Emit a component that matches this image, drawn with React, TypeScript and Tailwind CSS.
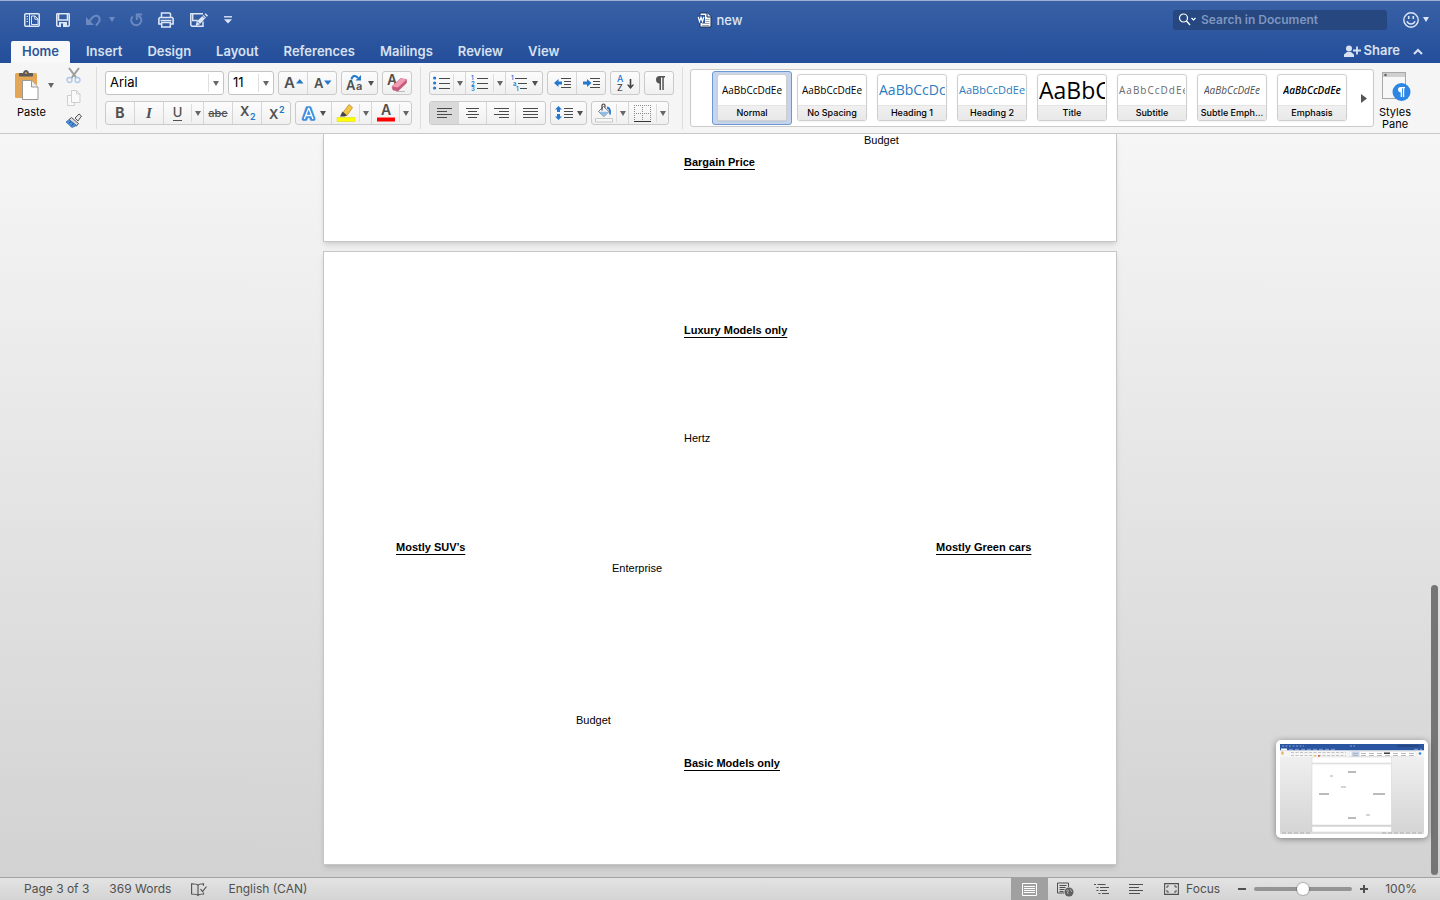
import type { ReactNode } from "react";

type IconProps = { w: number; h: number; children: ReactNode };

function Icon({ w, h, children }: IconProps) {
  return (
    <svg width={w} height={h} viewBox={`0 0 ${w} ${h}`} fill="none" aria-hidden="true" className="shrink-0 overflow-visible">
      {children}
    </svg>
  );
}

function Caret() {
  return (
    <svg width="6" height="5" viewBox="0 0 6 5" aria-hidden="true" className="shrink-0">
      <path d="M0 0h6L3 5z" fill="currentColor" />
    </svg>
  );
}

function Group({ children }: { children: ReactNode }) {
  return (
    <div className="flex h-6 shrink-0 divide-x divide-[#d6d6d6] rounded-[3px] border border-[#cacaca] bg-linear-to-b from-[#fcfcfc] to-[#f0f0f0]">
      {children}
    </div>
  );
}

type ToolProps = { label: string; width: string; children: ReactNode; pressed?: boolean };

function Tool({ label, width, children, pressed }: ToolProps) {
  return (
    <button
      type="button"
      aria-label={label}
      aria-pressed={pressed}
      className={`flex h-full items-center justify-center gap-1 text-[#505050] ${pressed ? "rounded-l-[2px] bg-[#d9d9d9]" : ""} ${width}`}
    >
      {children}
    </button>
  );
}

function More({ label }: { label: string }) {
  return (
    <button type="button" aria-label={label} className="flex h-full w-3 items-center text-[#666]">
      <span className="h-[18px] w-px bg-[#dcdcdc]" />
      <span className="flex flex-1 justify-center">
        <Caret />
      </span>
    </button>
  );
}

function Split({ children }: { children: ReactNode }) {
  return <div className="flex">{children}</div>;
}

function Combo({ label, value, width }: { label: string; value: string; width: string }) {
  return (
    <div className={`flex h-6 shrink-0 items-center rounded-[3px] border border-[#c4c4c4] bg-white ${width}`}>
      <select
        aria-label={label}
        defaultValue={value}
        className="h-full min-w-0 flex-1 appearance-none pl-1 text-[13px] text-black outline-none"
      >
        <option>{value}</option>
      </select>
      <span className="h-[18px] w-px bg-[#e0e0e0]" />
      <span className="flex w-[14px] justify-center text-[#666]">
        <Caret />
      </span>
    </div>
  );
}

function Separator() {
  return <div className="my-1 w-px shrink-0 bg-[#dedede]" />;
}

function Lines({ rows }: { rows: [number, number][] }) {
  return (
    <Icon w={15} h={12}>
      {rows.map(([x, w], i) => (
        <path key={i} d={`M${x} ${i * 3 + 1.5}h${w}`} stroke="#4a4a4a" />
      ))}
    </Icon>
  );
}

function TitleBar() {
  return (
    <div className="grid h-[38px] grid-cols-[1fr_auto_1fr] items-center border-t border-[#9db0d3] text-[#dde6f5]">
      <div className="flex items-center gap-4 pl-6">
        <button type="button" aria-label="Sidebar">
          <Icon w={16} h={14}>
            <rect x="0.75" y="0.75" width="14.5" height="12.5" rx="1" stroke="currentColor" strokeWidth="1.5" />
            <path d="M5.500 1v12" stroke="currentColor" />
            <path d="M2.500 3.500h1.500M2.500 6h1.500M2.500 8.500h1.500" stroke="currentColor" />
            <path d="M7.500 3h3.500l3 3v5.500H7.500z" stroke="currentColor" />
            <path d="M10.800 3v3.200H14" stroke="currentColor" />
          </Icon>
        </button>
        <button type="button" aria-label="Save">
          <Icon w={14} h={14}>
            <path d="M.75 1.200v11.300l.8.750h10.900l.8-.75V1.200l-.5-.45H1.200z" stroke="currentColor" strokeWidth="1.500" />
            <path d="M2.500 1v6h9V1" stroke="currentColor" strokeWidth="1.600" />
            <path d="M3 9h8v5H3z" fill="currentColor" />
            <path d="M5 10.500h2V14H5z" fill="#3059a1" />
          </Icon>
        </button>
        <button type="button" aria-label="Undo" className="flex items-center gap-2 text-[#6d8ac0]">
          <Icon w={15} h={14}>
            <path d="M0 4v8h8z" fill="currentColor" />
            <path d="M3.500 8.500C6 4 8.500 2.200 11 2.800c3 .8 3.500 4.200 1.500 6.700L10 12.500" stroke="currentColor" strokeWidth="2" />
          </Icon>
          <Caret />
        </button>
        <button type="button" aria-label="Repeat" className="-ml-px text-[#6d8ac0]">
          <Icon w={12} h={14}>
            <path d="M2.800 3.500a5 5 0 1 0 7.700 1L8 2.500" stroke="currentColor" strokeWidth="2" />
            <path d="M6.800 7V1.500H12" stroke="currentColor" strokeWidth="2" />
          </Icon>
        </button>
        <button type="button" aria-label="Print">
          <Icon w={16} h={16}>
            <path d="M3.500 5.500V.9h8l1 1v3.600" stroke="currentColor" strokeWidth="1.500" />
            <path d="M3 12H.9V6.500l1-1h12.200l1 1V12H13" stroke="currentColor" strokeWidth="1.600" />
            <path d="M2.500 8.500h11" stroke="currentColor" strokeWidth="1.500" />
            <path d="M3.700 10.500h8.600v4.600H3.700z" stroke="currentColor" strokeWidth="1.500" />
          </Icon>
        </button>
        <button type="button" aria-label="Mark up">
          <Icon w={18} h={14}>
            <path d="M13 8.500v4.700H2L.8 12V.8H13" stroke="currentColor" strokeWidth="1.500" />
            <path d="M2.700 1v6.500h5" stroke="currentColor" strokeWidth="1.400" />
            <path d="m5.500 13 1.200-4.500L13.500 2 16 4.500l-6.500 7z" fill="currentColor" />
            <path d="m14.500 1.200 1-1L18 2.500l-1 1.200z" fill="currentColor" />
            <path d="m7.500 8.800 2 2M12.500 3l2.500 2.500" stroke="#3059a1" strokeWidth=".8" />
          </Icon>
        </button>
        <button type="button" aria-label="Customize toolbar">
          <Icon w={8} h={8}>
            <path d="M0 .8h8" stroke="currentColor" strokeWidth="1.400" />
            <path d="M0 3.300h8L4 7.500z" fill="currentColor" />
          </Icon>
        </button>
      </div>
      <h1 className="flex items-center gap-1 text-[13px] leading-4 font-medium">
        <Icon w={15} h={16}>
          <path d="M3 1h7.500L14 4.500V15H3z" fill="#fff" stroke="#1c3258" />
          <path d="M10 1v4h4" stroke="#1c3258" fill="#dfe5ef" />
          <path d="M8.500 7.500h4M8.500 9.500h4M5 11.500h7.500M5 13.500h7.500" stroke="#9aa2b0" />
          <path d="M0 3h8v8H0z" fill="#2a55a0" />
          <path d="m1.200 4.800 1.300 4.700L4 5.300l1.500 4.200 1.300-4.700" stroke="#fff" strokeWidth="1.200" />
        </Icon>
        <span className="pt-px">new</span>
      </h1>
      <div className="flex items-center justify-end gap-4 pr-[11px]">
        <div className="flex h-5 w-[214px] items-center rounded-[3px] bg-[#26477f] pl-[5px]">
          <Icon w={19} h={13}>
            <circle cx="5.500" cy="5" r="4" stroke="#fff" strokeWidth="1.200" />
            <path d="m8.500 8 3.500 4" stroke="#fff" strokeWidth="1.400" />
            <path d="m13.500 5 2 2 2-2" stroke="#fff" strokeWidth="1.200" />
          </Icon>
          <input
            type="text"
            aria-label="Search in Document"
            placeholder="Search in Document"
            className="ml-1 h-full min-w-0 flex-1 bg-transparent text-[12px] font-semibold outline-none placeholder:text-[#7f96bf]"
          />
        </div>
        <button type="button" aria-label="Feedback" className="flex items-center gap-1">
          <Icon w={16} h={16}>
            <circle cx="8" cy="8" r="7.200" stroke="currentColor" strokeWidth="1.400" />
            <path d="M5.700 4v3M10.300 4v3" stroke="currentColor" strokeWidth="1.600" />
            <path d="M4 9.200c1.500 3.700 6.500 3.700 8 0" stroke="currentColor" strokeWidth="1.400" />
          </Icon>
          <Caret />
        </button>
      </div>
    </div>
  );
}

const tabs = ["Insert", "Design", "Layout", "References", "Mailings", "Review", "View"];

function TabBar() {
  return (
    <div className="flex justify-between pt-[3px] text-[13px] font-semibold text-[#d8e1f1]">
      <nav className="flex gap-[3px] pl-[11px]">
        <a
          href="#home"
          className="mr-[2px] flex h-[22px] w-[59px] items-center justify-center rounded-t-[2px] bg-[#f8f8f8] text-[#2b579a]"
        >
          Home
        </a>
        {tabs.map((tab) => (
          <a key={tab} href={`#${tab.toLowerCase()}`} className="flex h-[22px] items-center px-[11px]">
            {tab}
          </a>
        ))}
      </nav>
      <div className="flex h-5 items-center gap-[13px] pr-[17px]">
        <button type="button" className="flex items-center gap-[3px]">
          <Icon w={17} h={13}>
            <circle cx="5" cy="3.500" r="3" fill="currentColor" />
            <path d="M0 12V9.500L3 7h4l3 2.500V12z" fill="currentColor" />
            <path d="M9 5.500h8M13 1.500v8" stroke="currentColor" strokeWidth="1.800" />
          </Icon>
          Share
        </button>
        <button type="button" aria-label="Collapse ribbon">
          <Icon w={10} h={7}>
            <path d="m1 6 4-4 4 4" stroke="currentColor" strokeWidth="2" />
          </Icon>
        </button>
      </div>
    </div>
  );
}

function Clipboard() {
  return (
    <div className="flex w-24 shrink-0">
      <div className="flex w-[60px] flex-col pt-[7px] pl-[15px]">
        <div className="flex items-center gap-[9px] text-[#666]">
          <Icon w={24} h={30}>
            <rect x="0" y="3" width="22" height="25" rx="1.500" fill="#e2a654" />
            <path d="M4.500 6V3.500h4a2.500 3 0 0 1 5 0h4V6z" fill="#5b5b5b" stroke="#5b5b5b" strokeLinejoin="round" />
            <circle cx="11" cy="3" r="1" fill="#e2a654" />
            <path d="M7.500 10.500h9l6.500 6.500v12.500H7.500z" fill="#fff" stroke="#999" />
            <path d="M16.500 10.500V17H23" fill="#eee" stroke="#999" />
          </Icon>
          <button type="button" aria-label="Paste options" className="pt-px">
            <Caret />
          </button>
        </div>
        <button type="button" className="mt-[5px] w-fit pl-[2px] text-[11px] leading-[14px] text-black">
          Paste
        </button>
      </div>
      <div className="flex flex-col items-center gap-[7px] pt-1 pl-[6px]">
        <button type="button" aria-label="Cut">
          <Icon w={16} h={16}>
            <path d="m3 1 7.500 10M13 1 5.500 11" stroke="#9b9b9b" strokeWidth="2" />
            <circle cx="3.500" cy="13" r="2.500" stroke="#a9c6ea" strokeWidth="1.300" />
            <circle cx="11.500" cy="13" r="2.500" stroke="#a9c6ea" strokeWidth="1.300" />
          </Icon>
        </button>
        <button type="button" aria-label="Copy">
          <Icon w={16} h={16}>
            <path d="M5.500 5.500h-4v10h7v-3" fill="#fafafa" stroke="#cfcfcf" />
            <path d="M5.500.5h5L14 4v8.500H5.500z" fill="#fafafa" stroke="#cfcfcf" />
            <path d="M10.500.5V4H14" stroke="#cfcfcf" />
          </Icon>
        </button>
        <button type="button" aria-label="Format painter">
          <Icon w={16} h={16}>
            <path d="m9 5 4-4 2.500 2-3.500 5z" fill="#e8e8e8" stroke="#555" />
            <path d="m5.500 4.500 7 6-2 2.500-7.500-6.500z" fill="#d8d8d8" stroke="#555" />
            <path d="M3 6.500 0 9l6 5.500 3.500-1.500 1-.5z" fill="#4a8fdb" stroke="#3b70ad" strokeWidth=".8" />
            <path d="m3 10 2-1.500M5.500 12.500l2-2" stroke="#274f80" />
          </Icon>
        </button>
      </div>
    </div>
  );
}

function FontTools() {
  return (
    <div className="flex shrink-0 flex-col gap-[6px] px-2 pt-2">
      <div className="flex gap-1">
        <Combo label="Font" value="Arial" width="w-[119px]" />
        <Combo label="Font size" value="11" width="w-[46px]" />
        <Group>
          <Tool label="Increase font size" width="w-[29px]">
            <Icon w={19} h={18}>
              <text x="0" y="14" fontSize="15" fontWeight="600" fill="#505050">
                A
              </text>
              <path d="M12 9.500h7.500L15.800 5z" fill="#2478c8" />
            </Icon>
          </Tool>
          <Tool label="Decrease font size" width="w-[28px]">
            <Icon w={17} h={18}>
              <text x="0" y="14" fontSize="13" fontWeight="600" fill="#505050">
                A
              </text>
              <path d="M10 6.500h7.500L13.800 11z" fill="#2478c8" />
            </Icon>
          </Tool>
        </Group>
        <Group>
          <Tool label="Change case" width="w-[35px]">
            <Icon w={18} h={20}>
              <text x="0" y="17" fontSize="13" fontWeight="600" fill="#505050">
                A
              </text>
              <text x="10" y="17" fontSize="11" fontWeight="600" fill="#505050">
                a
              </text>
              <path d="M5.500 6.500C6 2.500 10 1.800 12 5" stroke="#2478c8" strokeWidth="2" />
              <path d="M15 2v5.500H9.500z" fill="#2478c8" />
            </Icon>
            <Caret />
          </Tool>
        </Group>
        <Group>
          <Tool label="Clear formatting" width="w-[28px]">
            <Icon w={20} h={20}>
              <text x="0" y="12" fontSize="14" fontWeight="600" fill="#505050">
                A
              </text>
              <path d="M9 18.500h9" stroke="#bbb" />
              <path d="m5 13.500 8.500-8 6 1v3.500l-8.500 8-5-1z" fill="#c9587a" stroke="#b34a6a" strokeWidth=".5" />
              <path d="m5 13.500 8.500-8 6 1-8.500 8z" fill="#ef9db4" />
            </Icon>
          </Tool>
        </Group>
      </div>
      <div className="flex gap-1">
        <Group>
          <Tool label="Bold" width="w-[29px]">
            <span className="text-[14px] leading-4 font-bold">B</span>
          </Tool>
          <Tool label="Italic" width="w-[29px]">
            <span className="font-['Liberation_Serif',serif] text-[15px] leading-4 font-bold italic">I</span>
          </Tool>
          <Split>
            <Tool label="Underline" width="w-[27px]">
              <span className="h-4 border-b border-[#505050] text-[13px] leading-[14px] font-medium">U</span>
            </Tool>
            <More label="Underline style" />
          </Split>
          <Tool label="Strikethrough" width="w-[29px]">
            <span className="text-[11px] leading-4 font-medium line-through">abc</span>
          </Tool>
          <Tool label="Subscript" width="w-[29px]">
            <Icon w={15} h={16}>
              <text x="0" y="11" fontSize="13" fontWeight="600" fill="#505050">
                X
              </text>
              <text x="10" y="15" fontSize="9" fontWeight="600" fill="#2478c8">
                2
              </text>
            </Icon>
          </Tool>
          <Tool label="Superscript" width="w-[28px]">
            <Icon w={15} h={16}>
              <text x="0" y="14" fontSize="13" fontWeight="600" fill="#505050">
                X
              </text>
              <text x="10" y="8" fontSize="9" fontWeight="600" fill="#2478c8">
                2
              </text>
            </Icon>
          </Tool>
        </Group>
        <Group>
          <Tool label="Text effects" width="w-[36px]">
            <Icon w={15} h={17}>
              <text x="2" y="14" fontSize="15" fontWeight="600" fill="#3d8ee0" stroke="#3d8ee0" strokeWidth="3.5" strokeLinejoin="round">
                A
              </text>
              <path d="m3.300 14 4.200-10.500h.4L12 14M4.800 10.500h5.700" stroke="#fff" strokeWidth="1.300" />
            </Icon>
            <Caret />
          </Tool>
          <Split>
            <Tool label="Highlight color" width="w-[27px]">
              <Icon w={18} h={20}>
                <path d="m6 9.500 6-8 3.500 3-5.500 8z" fill="#f4c542" stroke="#b98e2c" strokeWidth=".8" />
                <path d="m5.500 8.500 4.500 4-2.500 1H3z" fill="#444" />
                <path d="M0 14.500h18v4H0z" fill="#ff0" stroke="#d8d800" strokeWidth=".5" />
              </Icon>
            </Tool>
            <More label="Highlight colors" />
          </Split>
          <Split>
            <Tool label="Font color" width="w-[27px]">
              <Icon w={18} h={20}>
                <text x="9" y="12" fontSize="14" fontWeight="600" fill="#505050" textAnchor="middle">
                  A
                </text>
                <path d="M0 14.500h18v4H0z" fill="#f00" />
              </Icon>
            </Tool>
            <More label="Font colors" />
          </Split>
        </Group>
      </div>
    </div>
  );
}

function ParagraphTools() {
  return (
    <div className="flex shrink-0 flex-col gap-[6px] px-2 pt-2">
      <div className="flex gap-1">
        <Group>
          <Split>
            <Tool label="Bullets" width="w-[23px]">
              <Icon w={17} h={14}>
                <path d="M6 2.500h11M6 7.500h11M6 12.500h11" stroke="#4a4a4a" />
                <circle cx="1.600" cy="2" r="1.600" fill="#2478d0" />
                <circle cx="1.600" cy="7" r="1.600" fill="#2478d0" />
                <circle cx="1.600" cy="12" r="1.600" fill="#2478d0" />
              </Icon>
            </Tool>
            <More label="Bullet styles" />
          </Split>
          <Split>
            <Tool label="Numbering" width="w-[27px]">
              <Icon w={17} h={17}>
                <path d="M6 3.500h11M6 8.500h11M6 13.500h11" stroke="#4a4a4a" />
                <g fill="#2478d0" fontSize="6" fontWeight="600">
                  <text x="0" y="5">1</text>
                  <text x="0" y="10.500">2</text>
                  <text x="0" y="16">3</text>
                </g>
              </Icon>
            </Tool>
            <More label="Number styles" />
          </Split>
          <Tool label="Multilevel list" width="w-[36px]">
            <Icon w={17} h={17}>
              <path d="M4 3.500h12M7 8.500h9M9 13.500h7" stroke="#4a4a4a" />
              <g fill="#2478d0" fontSize="6" fontWeight="600">
                <text x="0" y="5">1</text>
                <text x="2" y="10.500">a</text>
                <text x="5" y="16">1</text>
              </g>
            </Icon>
            <Caret />
          </Tool>
        </Group>
        <Group>
          <Tool label="Decrease indent" width="w-[29px]">
            <Icon w={17} h={13}>
              <path d="M7 1.500h10M10 4.500h7M10 7.500h7M7 10.500h10" stroke="#4a4a4a" />
              <path d="m0 6 4.500-4v2.500H8v3H4.500V10z" fill="#2478d0" />
            </Icon>
          </Tool>
          <Tool label="Increase indent" width="w-[28px]">
            <Icon w={17} h={13}>
              <path d="M7 1.500h10M10 4.500h7M10 7.500h7M7 10.500h10" stroke="#4a4a4a" />
              <path d="M8.500 6 4 2v2.500H0v3h4V10z" fill="#2478d0" />
            </Icon>
          </Tool>
        </Group>
        <Group>
          <Tool label="Sort" width="w-[28px]">
            <Icon w={17} h={18}>
              <text x="0" y="8" fontSize="9" fontWeight="500" fill="#2478d0">
                A
              </text>
              <text x="0" y="17" fontSize="9" fontWeight="500" fill="#505050">
                Z
              </text>
              <path d="M13.500 5v8" stroke="#444" strokeWidth="1.600" />
              <path d="M10.500 10v1.500l3 3.500 3-3.500V10l-3 2z" fill="#444" />
            </Icon>
          </Tool>
        </Group>
        <Group>
          <Tool label="Show formatting marks" width="w-[28px]">
            <Icon w={11} h={14}>
              <path d="M5 0h6v1.500H9.800V14H8.300V1.500H7V14H5.500V7.500A3.800 3.800 0 0 1 5 0z" fill="#555" />
            </Icon>
          </Tool>
        </Group>
      </div>
      <div className="flex gap-1">
        <Group>
          <Tool label="Align left" width="w-[29px]" pressed>
            <Lines rows={[[0, 15], [0, 10], [0, 15], [0, 10]]} />
          </Tool>
          <Tool label="Align center" width="w-[28px]">
            <Lines rows={[[1, 13], [3, 9], [1, 13], [3, 9]]} />
          </Tool>
          <Tool label="Align right" width="w-[29px]">
            <Lines rows={[[0, 15], [5, 10], [0, 15], [5, 10]]} />
          </Tool>
          <Tool label="Justify" width="w-[29px]">
            <Lines rows={[[0, 15], [0, 15], [0, 15], [0, 15]]} />
          </Tool>
        </Group>
        <Group>
          <Tool label="Line spacing" width="w-[35px]">
            <Icon w={18} h={14}>
              <path d="M9 2.500h9M9 5.500h9M9 8.500h9M9 11.500h9" stroke="#4a4a4a" />
              <path d="m3.500 0 3.500 3.500H5V6H2V3.500H0zM3.500 14 7 10.500H5V8H2v2.500H0z" fill="#2478d0" />
            </Icon>
            <Caret />
          </Tool>
        </Group>
        <Group>
          <Split>
            <Tool label="Shading" width="w-[24px]">
              <Icon w={18} h={20}>
                <path d="m3.500 8.500 5-5 5.500 5-5 5z" fill="#f5f5f5" stroke="#777" />
                <path d="M3.800 8.800h10L9 13.500z" fill="#8fbde8" />
                <path d="M7 7.500V2.500a1.500 1.500 0 0 1 3 0v2" stroke="#444" strokeWidth="1.200" />
                <path d="M12 4.500c3 .5 3.500 3 3 7" stroke="#2478d0" strokeWidth="1.800" />
                <path d="M.5 15.500h17v3.500H.5z" fill="#f7f7f7" stroke="#c9c9c9" />
              </Icon>
            </Tool>
            <More label="Shading colors" />
          </Split>
          <Split>
            <Tool label="Borders" width="w-[27px]">
              <Icon w={17} h={17}>
                <path d="M.5 0v15M8.500 0v15M16.500 0v15M0 .5h17M0 8.500h17" stroke="#8c8c8c" strokeDasharray="1 1" />
                <path d="M0 16.500h17" stroke="#333" />
              </Icon>
            </Tool>
            <More label="Border styles" />
          </Split>
        </Group>
      </div>
    </div>
  );
}

const styles = [
  { name: "Normal", sample: "AaBbCcDdEe", look: "text-[10px] font-medium text-black" },
  { name: "No Spacing", sample: "AaBbCcDdEe", look: "text-[10px] font-medium text-black" },
  { name: "Heading 1", sample: "AaBbCcDc", look: "text-[14px] text-[#2b7bc0]" },
  { name: "Heading 2", sample: "AaBbCcDdEe", look: "text-[11px] text-[#2b7bc0]" },
  { name: "Title", sample: "AaBbC", look: "text-[23px] text-black" },
  { name: "Subtitle", sample: "AaBbCcDdEe", look: "text-[10px] tracking-[1px] text-[#6a6a6a]" },
  { name: "Subtle Emph...", sample: "AaBbCcDdEe", look: "text-[10px] font-medium italic text-[#505050]" },
  { name: "Emphasis", sample: "AaBbCcDdEe", look: "text-[10px] font-semibold italic text-black" },
];

function StyleGallery() {
  return (
    <div className="mt-[6px] ml-[7px] flex h-[58px] min-w-0 flex-1 items-center justify-between rounded-[3px] border border-[#cacaca] bg-white pr-[6px] pl-[21px]">
      <div className="flex min-w-0 overflow-hidden">
        {styles.map((style, i) => (
          <button
            key={style.name}
            type="button"
            aria-pressed={i === 0}
            className={`flex h-[54px] w-20 shrink-0 items-start justify-center rounded-[3px] border pt-[2px] ${
              i === 0 ? "border-[#6f97d2] bg-[#c6d5ec]" : "border-transparent"
            }`}
          >
            <span className="flex h-[47px] w-[70px] flex-col overflow-hidden rounded-[3px] border border-[#cfcfcf] bg-white shadow-xs">
              <span className="flex h-[30px] items-center overflow-hidden px-px">
                <span
                  className={`mx-auto max-w-full overflow-hidden font-['Open_Sans',sans-serif] leading-[30px] whitespace-nowrap ${style.look}`}
                >
                  {style.sample}
                </span>
              </span>
              <span className="h-[15px] border-t border-[#e4e4e4] bg-linear-to-b from-[#f0f0f0] to-[#e8e8e8] text-center text-[9px] leading-[14px] font-medium whitespace-nowrap text-black">
                {style.name}
              </span>
            </span>
          </button>
        ))}
      </div>
      <button type="button" aria-label="More styles">
        <Icon w={6} h={9}>
          <path d="M0 0v9l6-4.500z" fill="#555" />
        </Icon>
      </button>
    </div>
  );
}

function Ribbon() {
  return (
    <div className="flex h-[71px] shrink-0 border-b border-[#c8c8c8] bg-[#f5f5f5]">
      <Clipboard />
      <Separator />
      <FontTools />
      <Separator />
      <ParagraphTools />
      <Separator />
      <StyleGallery />
      <button
        type="button"
        className="mr-6 flex w-[42px] shrink-0 flex-col items-center gap-1 pt-2 text-[11px] leading-3 text-black"
      >
        <Icon w={28} h={31}>
          <rect x="1.500" y="1.500" width="23" height="26" fill="#f7f7f7" stroke="#a8a8a8" />
          <path d="M2 2h22v4H2z" fill="#cfcfcf" />
          <circle cx="4.500" cy="4" r="1.300" fill="#666" />
          <circle cx="20.500" cy="21" r="9" fill="#2b86e5" />
          <path d="M19 16h5v1.200h-.8V26h-1.300v-8.800H21V26h-1.300v-4.500A2.800 2.800 0 0 1 19 16z" fill="#fff" />
        </Icon>
        <span>Styles Pane</span>
      </button>
    </div>
  );
}

function Line({ text, className, heading }: { text: string; className: string; heading?: boolean }) {
  return (
    <p className={`leading-5 ${heading ? "font-bold underline decoration-1 underline-offset-[3px]" : ""} ${className}`}>
      {text}
    </p>
  );
}

function Document() {
  return (
    <main className="relative min-h-0 flex-1 overflow-hidden bg-linear-to-b from-[#f6f6f6] to-[#d2d2d2] font-['Liberation_Sans',Arial,sans-serif] text-[11px] text-black">
      <section className="mx-auto flow-root h-[108px] w-[794px] border border-t-0 border-[#c6c6c6] bg-white px-[72px] shadow-md">
        <Line text="Budget" className="-mt-1 pl-[468px]" />
        <Line text="Bargain Price" heading className="mt-[2px] pl-[288px]" />
      </section>
      <section className="mx-auto mt-[9px] h-[614px] w-[794px] border border-[#c6c6c6] bg-white px-[72px] pt-[68px] shadow-md">
        <Line text="Luxury Models only" heading className="pl-[288px]" />
        <Line text="Hertz" className="mt-[88px] pl-[288px]" />
        <div className="mt-[89px] flex">
          <Line text="Mostly SUV’s" heading className="w-[540px] shrink-0" />
          <Line text="Mostly Green cars" heading className="" />
        </div>
        <Line text="Enterprise" className="mt-px pl-[216px]" />
        <Line text="Budget" className="mt-[132px] pl-[180px]" />
        <Line text="Basic Models only" heading className="mt-[23px] pl-[288px]" />
      </section>
      <div className="absolute right-[2px] bottom-[2px] h-[290px] w-[7px] rounded-full bg-[#757575]" />
      <Preview />
    </main>
  );
}

const previewMarks: [number, number, number, string][] = [
  [68, 28, 8, "#777"],
  [50, 32, 3, "#aaa"],
  [61, 43, 5, "#aaa"],
  [39, 50, 10, "#777"],
  [93, 50, 12, "#777"],
  [86, 71, 4, "#aaa"],
  [68, 74, 8, "#777"],
];

function Preview() {
  return (
    <div className="absolute right-3 bottom-[39px] rounded-[5px] bg-white p-1 shadow-[0_1px_6px_rgba(0,0,0,0.4)]">
      <svg width="144" height="90" viewBox="0 0 144 90" role="img" aria-label="Window preview">
        <defs>
          <linearGradient id="desk" x1="0" y1="0" x2="0" y2="1">
            <stop offset="0" stopColor="#f4f4f4" />
            <stop offset="1" stopColor="#d4d4d4" />
          </linearGradient>
        </defs>
        <path d="M0 0h144v90H0z" fill="url(#desk)" />
        <path d="M0 0h144v6.500H0z" fill="#2a55a0" />
        <path d="M0 6.500h144V13H0z" fill="#f5f5f5" />
        <path d="M1 4.500h6v2H1z" fill="#fff" />
        <path d="M2 2h22M70 2h5" stroke="#8aa3d0" strokeDasharray="2 1.500" />
        <path d="M117 2h22" stroke="#26477f" strokeWidth="2" />
        <path d="M9 5.300h48M134 5.300h8" stroke="#9fb3da" strokeWidth=".8" strokeDasharray="4 2" />
        <path d="M11 8.500h55M11 11.500h55" stroke="#c4c4c4" strokeDasharray="3 1.500" />
        <path d="M1.500 7.500h2v3h-2z" fill="#e2a654" />
        <path d="M34 12h2" stroke="#e6e600" />
        <path d="M38 12h2" stroke="#f00" />
        <path d="M69.500 7.500H136v5H69.500z" fill="#fff" stroke="#ddd" strokeWidth=".5" />
        <path d="M71.500 7.500h8v5h-8z" fill="#c6d5ec" />
        <path d="M73 9.500h62M73 11.500h62" stroke="#aaa" strokeWidth=".8" strokeDasharray="5 3" />
        <path d="M104 9.200h6" stroke="#333" strokeWidth="1.400" />
        <circle cx="140" cy="9.500" r="1.300" fill="#2b86e5" />
        <path d="M32 13h79.500v6H32zM32 20h79.500v61H32zM32 82.500h79.500V88H32z" fill="#fff" stroke="#c8c8c8" strokeWidth=".4" />
        {previewMarks.map(([x, y, w, color]) => (
          <path key={`${x}-${y}`} d={`M${x} ${y}h${w}`} stroke={color} />
        ))}
        <path d="M0 88h144v2H0z" fill="#dcdcdc" />
        <path d="M2 89h28M102 89h40" stroke="#999" strokeWidth=".7" strokeDasharray="4 2" />
      </svg>
    </div>
  );
}

function StatusBar() {
  return (
    <footer className="flex h-[23px] shrink-0 items-center justify-between border-t border-[#a3a3a3] bg-linear-to-b from-[#e3e3e3] to-[#d4d4d4] text-[12px] text-[#505050]">
      <div className="flex items-center gap-5 pl-6">
        <button type="button">Page 3 of 3</button>
        <button type="button">369 Words</button>
        <button type="button" aria-label="Proofing">
          <Icon w={17} h={13}>
            <path d="M7 12V2.500C6 1 3 .8.600.8V11C3 11 6 11 7 12.500c1-1.500 3-1.500 5.500-1.500V9.500M7 2.500C8 1 10 .8 12.500.8v2" stroke="currentColor" strokeWidth="1.100" />
            <path d="m9.500 6 2 2.500L15.500 3.500" stroke="currentColor" strokeWidth="1.200" />
          </Icon>
        </button>
        <button type="button">English (CAN)</button>
      </div>
      <div className="flex h-full items-center pr-[23px]">
        <button type="button" aria-label="Print layout" aria-pressed className="flex h-full w-[37px] items-center justify-center bg-[#a0a0a0]">
          <Icon w={15} h={13}>
            <path d="M.5.5h14v12H.5z" stroke="#fff" />
            <path d="M2 3.500h11M2 5.500h11M2 7.500h11M2 9.500h11" stroke="#fff" />
          </Icon>
        </button>
        <button type="button" aria-label="Web layout" className="ml-[9px]">
          <Icon w={17} h={15}>
            <path d="M7 11H.5V1h11v4" stroke="currentColor" />
            <path d="M2.500 3.500h7M2.500 5.500h6M2.500 7.500h5M2.500 9.500h4" stroke="currentColor" />
            <circle cx="12" cy="10" r="4.500" fill="#606060" />
            <path d="M9.500 8.500c1.500-1 2.500 0 1.500 1s0 2 .5 2.500M13.500 7.500c0 1.500 1 1.500 1.500 2.500" stroke="#ccc" strokeWidth=".9" />
          </Icon>
        </button>
        <button type="button" aria-label="Outline" className="ml-5">
          <Icon w={15} h={11}>
            <path d="M0 .5h2M3.500.5h8M2.500 3.500h2M6 3.500h9M2.500 6.500h2M6 6.500h7M4.500 9.500h2M8 9.500h7" stroke="currentColor" />
          </Icon>
        </button>
        <button type="button" aria-label="Draft" className="ml-5">
          <Icon w={15} h={11}>
            <path d="M0 .5h14M0 3.500h10M0 6.500h14M0 9.500h11" stroke="currentColor" strokeWidth="1.200" />
          </Icon>
        </button>
        <button type="button" className="ml-5 flex items-center gap-[7px]">
          <Icon w={15} h={12}>
            <path d="M.6.6h13.800v10.800H.6z" stroke="currentColor" strokeWidth="1.100" />
            <path d="M3 5V3h2M10 3h2v2M12 7v2h-2M5 9H3V7" stroke="currentColor" />
          </Icon>
          Focus
        </button>
        <button type="button" aria-label="Zoom out" className="ml-[18px]">
          <Icon w={8} h={8}>
            <path d="M0 4h8" stroke="currentColor" strokeWidth="2" />
          </Icon>
        </button>
        <input
          type="range"
          aria-label="Zoom"
          defaultValue={50}
          className="mx-2 h-[4px] w-[98px] appearance-none rounded-full bg-[#949494] [&::-webkit-slider-thumb]:size-3 [&::-webkit-slider-thumb]:appearance-none [&::-webkit-slider-thumb]:rounded-full [&::-webkit-slider-thumb]:bg-white [&::-webkit-slider-thumb]:shadow-[0_0_1px_1px_rgba(0,0,0,0.2)]"
        />
        <button type="button" aria-label="Zoom in">
          <Icon w={8} h={8}>
            <path d="M0 4h8M4 0v8" stroke="currentColor" strokeWidth="2" />
          </Icon>
        </button>
        <button type="button" className="ml-[17px]">
          100%
        </button>
      </div>
    </footer>
  );
}

export default function App() {
  return (
    <div className="flex h-screen flex-col overflow-hidden font-[Inter,sans-serif]">
      <header className="h-[63px] shrink-0 bg-linear-to-b from-[#3861a6] to-[#244e9a]">
        <TitleBar />
        <TabBar />
      </header>
      <Ribbon />
      <Document />
      <StatusBar />
    </div>
  );
}
